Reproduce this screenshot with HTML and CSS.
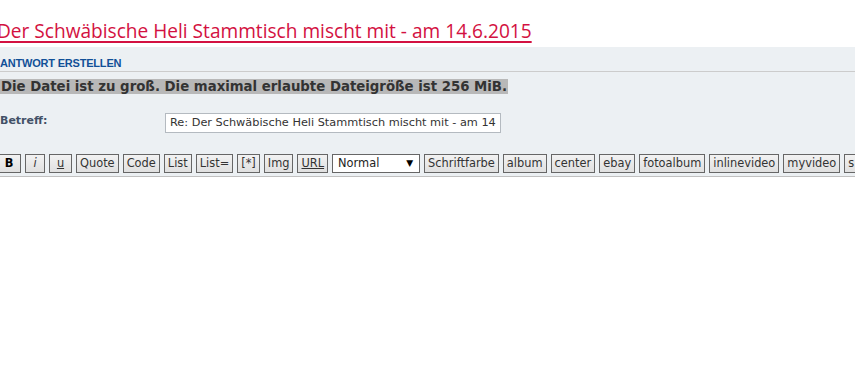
FILE: index.html
```html
<!DOCTYPE html>
<html lang="de">
<head>
    <meta charset="UTF-8">
    <title>Antwort erstellen</title>
    <link rel="stylesheet" href="styles.css">
</head>
<body>
    <div class="page">
        <h2 class="topic-title"><a href="#">Der Schwäbische Heli Stammtisch mischt mit - am 14.6.2015</a></h2>
        <form class="postform">
            <div class="panel">
                <h3>Antwort erstellen</h3>
                <p class="error"><span>Die Datei ist zu groß. Die maximal erlaubte Dateigröße ist 256 MiB.</span></p>
                <dl class="subject">
                    <dt><label for="subject">Betreff:</label></dt>
                    <dd><input type="text" id="subject" value="Re: Der Schwäbische Heli Stammtisch mischt mit - am 14.6.2015"></dd>
                </dl>
                <div class="format-buttons">
                    <button type="button" class="btn-b">B</button>
                    <button type="button" class="btn-i">i</button>
                    <button type="button" class="btn-u">u</button>
                    <button type="button">Quote</button>
                    <button type="button">Code</button>
                    <button type="button">List</button>
                    <button type="button">List=</button>
                    <button type="button">[*]</button>
                    <button type="button">Img</button>
                    <button type="button" class="btn-url">URL</button>
                    <span class="fontsize">Normal <span class="arrow">&#9660;</span></span>
                    <button type="button">Schriftfarbe</button>
                    <button type="button">album</button>
                    <button type="button">center</button>
                    <button type="button">ebay</button>
                    <button type="button">fotoalbum</button>
                    <button type="button">inlinevideo</button>
                    <button type="button">myvideo</button>
                    <button type="button">s</button>
                </div>
            </div>
            <textarea class="message"></textarea>
        </form>
    </div>
</body>
</html>
```

FILE: styles.css
```css
html, body { margin: 0; padding: 0; background: #fff; overflow: hidden; }
body { font-family: "DejaVu Sans", Verdana, sans-serif; color: #536482; }
.page { margin-left: -3px; width: 880px; }

.topic-title { margin: 0; padding: 21px 0 0 0; height: 26px; font-family: "Open Sans", "DejaVu Sans", sans-serif; font-size: 19.1px; font-weight: normal; line-height: 21px; }
.topic-title a { color: #d31141; text-decoration: underline; text-decoration-thickness: 2px; text-underline-offset: 3px; }

.postform { margin: 0; }
.panel { background: #ecf0f3; padding: 0 0 0 3px; height: 129px; }
.panel h3 { margin: 0; padding: 10px 0 2px 0; font-family: "Liberation Sans", Arial, sans-serif; font-size: 11px; font-weight: bold; text-transform: uppercase; color: #115098; border-bottom: 1px solid #ccc; line-height: 12px; letter-spacing: -0.2px; }

.error { margin: 7px 0 0 0; font-size: 13.3px; font-weight: bold; line-height: 16px; color: #333; }
.error span { background: #b8b8b8; padding: 0 1px 0 1px; }

.subject { display: flex; margin: 16px 0 0 0; }
.subject dt { width: 165px; font-size: 11px; font-weight: bold; color: #425067; padding-top: 3px; }
.subject dd { margin: 0; }
.subject input { width: 326px; height: 18px; border: 1px solid #b4bac0; padding: 0 4px; font-family: "DejaVu Sans", Verdana, sans-serif; font-size: 11.3px; color: #333; background: #fff; box-sizing: content-box; }

.format-buttons { display: flex; gap: 4px; margin: 21px 0 0 -3px; white-space: nowrap; }
.format-buttons button, .fontsize { font-family: "DejaVu Sans", Verdana, sans-serif; font-size: 11.4px; height: 19px; line-height: 15px; padding: 0 3px; border: 1px solid #666; background: linear-gradient(#f2f2f2, #e0e0e0); color: #333; box-sizing: border-box; margin: 0; flex: none; }
.format-buttons .btn-b { width: 24px; font-weight: bold; color: #000; }
.format-buttons .btn-i { width: 20px; font-style: italic; }
.format-buttons .btn-u { width: 23px; text-decoration: underline; }
.format-buttons .btn-url { text-decoration: underline; }
.fontsize { display: inline-flex; align-items: center; width: 88px; padding: 0 6px 0 5px; background: #fff; color: #222; justify-content: space-between; }
.fontsize .arrow { font-size: 9px; color: #000; }

.message { display: block; width: 880px; height: 210px; margin: 0; border: 1px solid #c0c0c0; border-right: none; background: #fff; resize: none; box-sizing: border-box; }
```
